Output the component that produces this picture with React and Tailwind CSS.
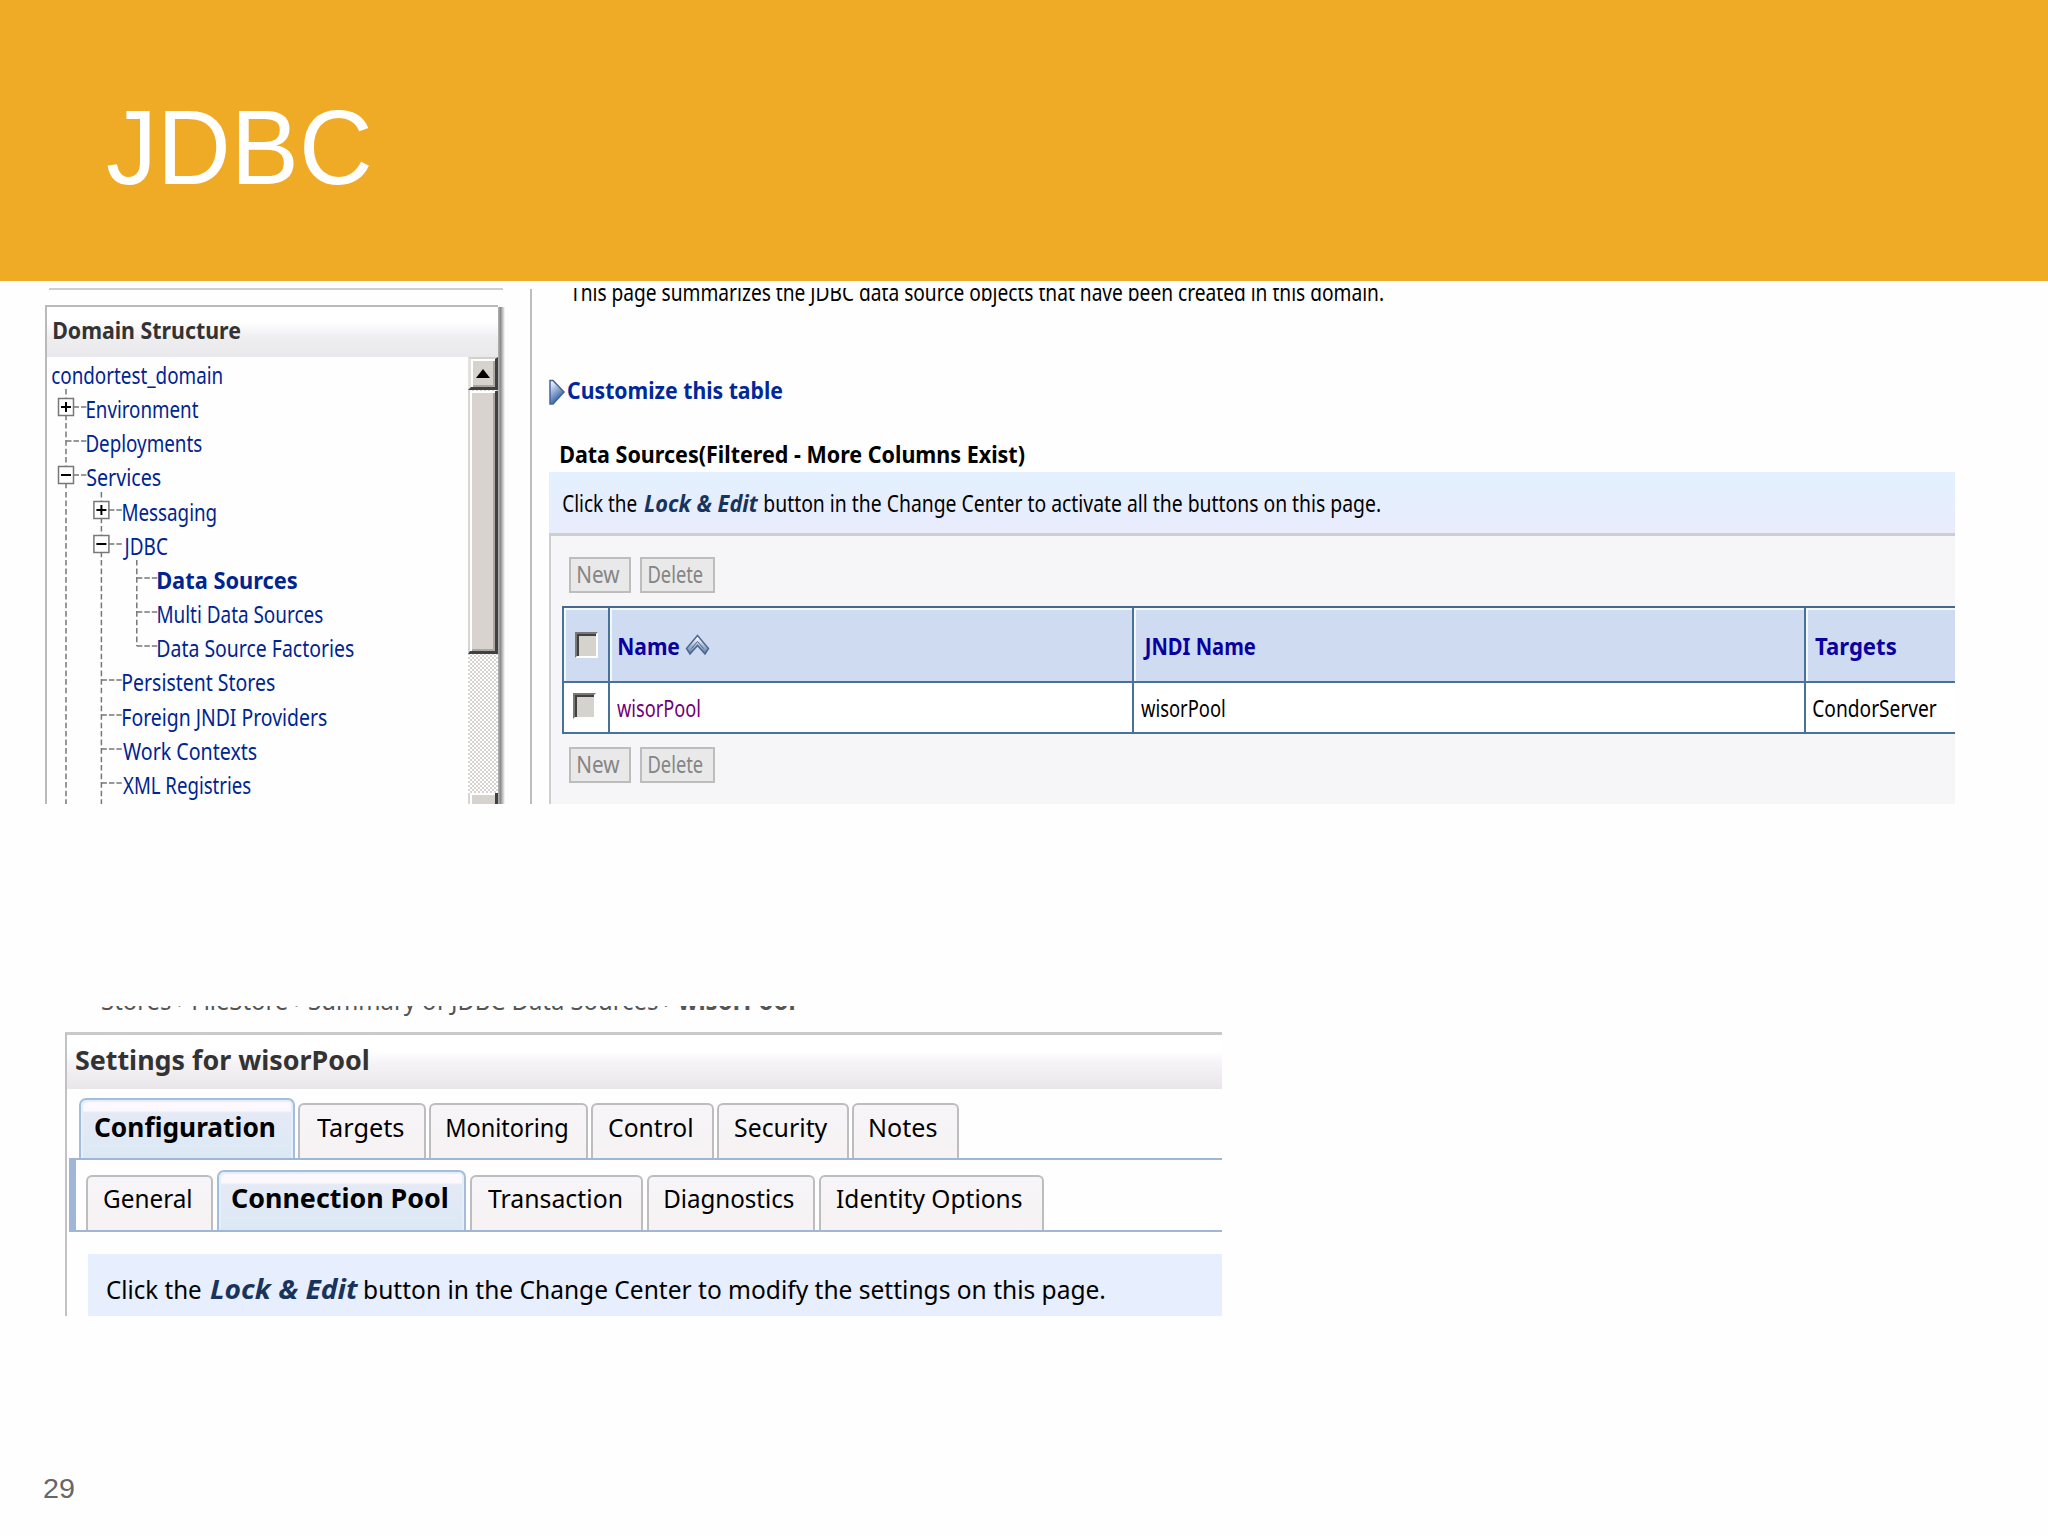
import { useLayoutEffect, useRef, useState } from "react";

/* Single line of text whose glyphs are condensed or stretched to `w` pixels. */
function T({ w, className = "", children }) {
  const ref = useRef(null);
  const [fit, setFit] = useState({ scale: 1, left: 0 });
  useLayoutEffect(() => {
    const cs = getComputedStyle(ref.current);
    const ctx = document.createElement("canvas").getContext("2d");
    ctx.font = `${cs.fontStyle} ${cs.fontWeight} ${cs.fontSize} ${cs.fontFamily}`;
    const m = ctx.measureText(children);
    const scale = w / (m.actualBoundingBoxRight + m.actualBoundingBoxLeft);
    setFit({ scale, left: m.actualBoundingBoxLeft * scale });
  }, [w, children]);
  return (
    <span className={`block shrink-0 whitespace-pre ${className}`} style={{ width: w }}>
      <span
        ref={ref}
        className="inline-block origin-left"
        style={{ transform: `translateX(${fit.left}px) scaleX(${fit.scale})` }}
      >
        {children}
      </span>
    </span>
  );
}

const TREE = [
  { label: "condortest_domain", w: 170, level: 0 },
  { label: "Environment", w: 111, level: 1, box: "+", lines: [] },
  { label: "Deployments", w: 115, level: 1, lines: [] },
  { label: "Services", w: 74, level: 1, box: "-", lines: [] },
  { label: "Messaging", w: 93, level: 2, box: "+", lines: [0] },
  { label: "JDBC", w: 45, level: 2, box: "-", lines: [0] },
  { label: "Data Sources", w: 139, level: 3, lines: [0, 1], bold: true },
  { label: "Multi Data Sources", w: 165, level: 3, lines: [0, 1] },
  { label: "Data Source Factories", w: 196, level: 3, lines: [0, 1], last: true },
  { label: "Persistent Stores", w: 152, level: 2, lines: [0] },
  { label: "Foreign JNDI Providers", w: 204, level: 2, lines: [0] },
  { label: "Work Contexts", w: 134, level: 2, lines: [0] },
  { label: "XML Registries", w: 128, level: 2, lines: [0], tail: true },
];

function Branch({ level, box, lines, last, tail }) {
  const width = level * 35.4;
  const x = 14 + (level - 1) * 35.4;
  const end = tail ? 44 : 31.2;
  return (
    <svg width={width} height="34.2" className="block shrink-0 overflow-visible" fill="none" stroke="#777" strokeWidth="1.5">
      {lines.map((n) => (
        <path key={n} d={`M${14 + n * 35.4} -3V${end}`} strokeDasharray="5.6 2.95" />
      ))}
      <path d={`M${x} -3V${last ? 15 : end}`} strokeDasharray="5.6 2.95" />
      <path d={`M${x} 15H${width - 1}`} strokeDasharray="5.5 2" />
      {box && (
        <>
          <rect x={x - 7.5} y="6.5" width="15" height="17" fill="#fff" stroke="#777" />
          <path d={`M${x - 5} 15H${x + 5}`} stroke="#000" strokeWidth="2" />
          {box === "+" && <path d={`M${x} 10V20`} stroke="#000" strokeWidth="2" />}
        </>
      )}
    </svg>
  );
}

function DomainStructure() {
  return (
    <div className="ml-[45px] flex w-[461px] flex-col">
      <div className="ml-[4px] h-[2px] w-[454px] shrink-0 bg-[#cfcdd0]" />
      <div className="mt-[15px] flex h-[499px]">
        <div className="flex w-[453px] flex-col border-t-2 border-l-2 border-[#b9babb]">
          <div className="h-[50px] shrink-0 bg-linear-to-b from-white from-30% via-[#eeeef0] via-62% to-[#e9e9eb] pt-[6px] pl-[7px]">
            <T w={186} className="font-bold text-[#333]">Domain Structure</T>
          </div>
          <div className="flex min-h-0 grow">
            <div className="grow pt-[1px] pl-[5px]">
              {TREE.map((n) => (
                <div key={n.label} className="flex h-[34.17px]">
                  {n.level > 0 && <Branch {...n} />}
                  <T w={n.w} className={n.bold ? "font-bold text-[#002590]" : "text-[#002590]"}>
                    {n.label}
                  </T>
                </div>
              ))}
            </div>
            <div className="flex w-[30px] flex-col bg-[#e9e5e4] bg-[conic-gradient(#fff_25%,#d8d2d0_0_50%,#fff_0_75%,#d8d2d0_0)] bg-[length:4px_4px]">
              <div className="flex h-[33px] shrink-0 items-center justify-center border-t-2 border-r-[3px] border-b-[3px] border-l-[3px] border-t-[#d4d0c8] border-r-[#404040] border-b-[#404040] border-l-[#e4e1dc] bg-[#d6d3cf] shadow-[inset_2px_2px_0_#fff,inset_-2px_-2px_0_#aaa6a2]">
                <svg width="14" height="9"><path d="M7 0L14 9H0Z" fill="#000" /></svg>
              </div>
              <div className="mt-[1px] h-[263px] shrink-0 border-r-[3px] border-b-[3px] border-l-2 border-r-[#404040] border-b-[#404040] border-l-[#d8d5d0] bg-[#d9d3d0] shadow-[inset_2px_2px_0_#fff,inset_-2px_-2px_0_#aaa6a2]" />
              <div className="mt-[139px] h-[14px] shrink-0 border-r-[3px] border-l-2 border-r-[#404040] border-l-[#d8d5d0] bg-[#d6d3cf] shadow-[inset_2px_2px_0_#fff]" />
            </div>
          </div>
        </div>
        <div className="mt-[2px] w-[7px] bg-linear-to-r from-[#b5b5b5] via-[#8b8b8b] via-35% to-[#fefefe]" />
      </div>
    </div>
  );
}

function Buttons() {
  const base = "flex h-[36px] border-2 border-[#bdbdbd] bg-[#e9e9e9] text-[#858585] leading-[31px]";
  return (
    <div className="flex gap-[9px] pl-[18px]">
      <div className={`${base} w-[62px] pl-[7px]`}><T w={42}>New</T></div>
      <div className={`${base} w-[75px] pl-[7px]`}><T w={54}>Delete</T></div>
    </div>
  );
}

function Check({ className = "" }) {
  return (
    <div className={`h-[26px] w-[23px] border-2 border-t-[#777] border-r-white border-b-white border-l-[#777] bg-[#d6d2ce] shadow-[inset_2px_2px_0_#404040] ${className}`} />
  );
}

function Head({ children, className = "" }) {
  return (
    <div className={`flex border-b-2 border-[#4a7299] bg-[#cfdbf1] shadow-[inset_2px_2px_0_#f2f8ff] ${className}`}>{children}</div>
  );
}

function DataSources() {
  return (
    <div className="ml-[17px] flex w-[1406px] flex-col">
      <T w={813} className="-mt-[13px] ml-[21px] text-black">
        This page summarizes the JDBC data source objects that have been created in this domain.
      </T>
      <div className="mt-[64px] flex h-[34px]">
        <svg width="16" height="27" className="mt-[6px] block" viewBox="0 0 16 27">
          <defs>
            <linearGradient id="arrow" x1="0" y1="0" x2="0.5" y2="1">
              <stop offset="0.1" stopColor="#eef5ff" />
              <stop offset="0.8" stopColor="#4f76b4" />
            </linearGradient>
          </defs>
          <path d="M1 1.5H4L15 13L4 25H1Z" fill="url(#arrow)" stroke="#44639a" strokeWidth="1.5" />
        </svg>
        <T w={214} className="ml-[3px] font-bold text-[#00289a]">Customize this table</T>
      </div>
      <T w={464} className="mt-[30px] ml-[12px] font-bold text-black">
        Data Sources(Filtered - More Columns Exist)
      </T>
      <div className="mt-px flex h-[61px] shrink-0 bg-linear-to-b from-[#e3f0fe] to-[#e9ecfd] pt-[14px] pl-[14px] text-black">
        <T w={74}>Click the</T>
        <T w={115} className="ml-[7px] font-bold text-[#18345c] italic">{"Lock & Edit"}</T>
        <T w={615} className="ml-[6px]">button in the Change Center to activate all the buttons on this page.</T>
      </div>
      <div className="h-[271px] shrink-0 border-t-[3px] border-l-2 border-[#cccfd0] bg-[#f6f6f8] pt-[21px]">
        <Buttons />
        <div className="mt-[13px] ml-[11px] grid grid-cols-[48px_524px_672px_149px] grid-rows-[75px_51px] border-t-2 border-[#44698c]">
          <Head className="border-x-2"><Check className="mt-[24px] ml-[11px]" /></Head>
          <Head className="border-r-2 pt-[21px] pl-[9px]">
            <T w={60} className="font-bold text-[#0a00a0]">Name</T>
            <svg width="25" height="23" viewBox="0 0 25 23" className="mt-[5px] ml-[6px] block">
              <defs>
                <linearGradient id="sort" x1="0" y1="0" x2="0" y2="1">
                  <stop offset="0.1" stopColor="#ffffff" />
                  <stop offset="1" stopColor="#5576a8" />
                </linearGradient>
              </defs>
              <path d="M12.5 1.5L23.5 14.5L20 20L12.5 11.5L5 20L1.5 14.5Z" fill="url(#sort)" stroke="#4c6690" strokeWidth="1.5" />
              <path d="M6.5 14.5L12.5 7.500L18.500 14.500" fill="none" stroke="#4c6690" strokeWidth="1" />
            </svg>
          </Head>
          <Head className="border-r-2 pt-[21px] pl-[9px]">
            <T w={112} className="font-bold text-[#0a00a0]">JNDI Name</T>
          </Head>
          <Head className="pt-[21px] pl-[9px]">
            <T w={81} className="font-bold text-[#0a00a0]">Targets</T>
          </Head>
          <div className="border-x-2 border-b-2 border-[#4a7299] bg-white"><Check className="mt-[10px] ml-[9px]" /></div>
          <div className="border-r-2 border-b-2 border-[#4a7299] bg-white pt-[8px] pl-[7px]">
            <T w={83} className="text-[#700078]">wisorPool</T>
          </div>
          <div className="border-r-2 border-b-2 border-[#4a7299] bg-white pt-[8px] pl-[7px]">
            <T w={84} className="text-black">wisorPool</T>
          </div>
          <div className="border-b-2 border-[#4a7299] bg-white pt-[8px] pl-[7px]">
            <T w={124} className="text-black">CondorServer</T>
          </div>
        </div>
        <div className="mt-[13px]"><Buttons /></div>
      </div>
    </div>
  );
}

function Tab({ box, w, label, active }) {
  return (
    <div
      className={
        active
          ? "flex h-[60px] shrink-0 justify-center rounded-t-[7px] border-2 border-b-0 border-[#a3bddb] bg-linear-to-b from-[#fbf9fe] from-18% via-[#e5eaf5] via-22% to-[#dbe9f5] pt-[9px] pr-[4px] font-bold shadow-[inset_2px_2px_0_#e3f0fb,inset_-2px_0_0_#e3f0fb]"
          : "mt-[5px] flex h-[55px] shrink-0 justify-center rounded-t-[6px] border-2 border-b-0 border-[#bdbcbe] bg-linear-to-b from-[#f6f5f7] to-[#f7f2f4] pt-[4px] pr-[4px]"
      }
      style={{ width: box }}
    >
      <T w={w}>{label}</T>
    </div>
  );
}

function Settings() {
  return (
    <div className="mt-[202px] ml-[65px] flex h-[310px] w-[1157px] shrink-0 flex-col overflow-hidden text-[26px] leading-[36px] text-black">
      <div className="-mt-[24px] ml-[37px] flex h-[36px] shrink-0 text-[#555]">
        <T w={556}>{"Stores >FileStore >Summary of JDBC Data Sources"}</T>
        <T w={129} className="ml-[7px] font-bold">{">wisorPool"}</T>
      </div>
      <div className="mt-[14px] flex shrink-0 flex-col border-t-[3px] border-l-2 border-t-[#c9c8ca] border-l-[#c2c2c4]">
        <div className="h-[54px] bg-linear-to-b from-white from-30% via-[#f6f4f7] via-50% to-[#e8e6e9] pt-[7px] pl-[9px]">
          <T w={292} className="font-bold text-[#333]">Settings for wisorPool</T>
        </div>
        <div className="mt-[9px] ml-[12px] flex h-[60px] gap-[3px]">
          <Tab box={216} w={180} label="Configuration" active />
          <Tab box={128} w={87} label="Targets" />
          <Tab box={159} w={120} label="Monitoring" />
          <Tab box={123} w={83} label="Control" />
          <Tab box={132} w={93} label="Security" />
          <Tab box={107} w={67} label="Notes" />
        </div>
        <div className="ml-[2px] flex h-[74px] gap-[4px] border-y-2 border-l-[7px] border-[#9fb6d6] pt-[10px] pl-[10px] leading-[35px]">
          <Tab box={127} w={87} label="General" />
          <Tab box={249} w={215} label="Connection Pool" active />
          <Tab box={173} w={133} label="Transaction" />
          <Tab box={168} w={129} label="Diagnostics" />
          <Tab box={225} w={185} label="Identity Options" />
        </div>
        <div className="mt-[22px] ml-[21px] flex h-[62px] bg-[#e7eefd] pt-[17px] pl-[19px]">
          <T w={94}>Click the</T>
          <T w={149} className="ml-[9px] font-bold text-[#18345c] italic">{"Lock & Edit"}</T>
          <T w={740} className="ml-[6px]">button in the Change Center to modify the settings on this page.</T>
        </div>
      </div>
    </div>
  );
}

export default function App() {
  return (
    <div className="flex h-[1536px] w-[2048px] flex-col overflow-hidden bg-[#fefefe] font-['Noto_Sans',sans-serif] text-[23.5px] leading-[34px]">
      <header className="h-[281px] shrink-0 bg-[#f0ab26] pt-[94px] pl-[107px] font-['Liberation_Sans',sans-serif] text-[106.5px] leading-[107px] text-white">
        <T w={262}>JDBC</T>
      </header>
      <div className="mt-[7px] flex h-[516px] shrink-0 overflow-hidden">
        <DomainStructure />
        <div className="mt-px ml-[24px] w-[2px] shrink-0 bg-[#bdbdbf]" />
        <DataSources />
      </div>
      <Settings />
      <footer className="mt-[155px] ml-[44px] font-['Liberation_Sans',sans-serif] text-[28.5px] leading-[34px] text-[#666]">
        <T w={30}>29</T>
      </footer>
    </div>
  );
}
